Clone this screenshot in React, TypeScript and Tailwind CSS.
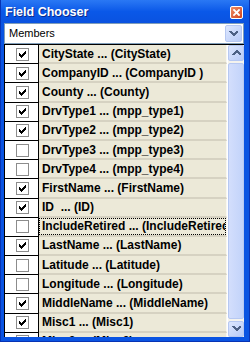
import React from "react";

type Row = { label: string; checked: boolean; focus?: boolean };

const rows: Row[] = [
  { label: "CityState ... (CityState)", checked: true },
  { label: "CompanyID ... (CompanyID )", checked: true },
  { label: "County ... (County)", checked: true },
  { label: "DrvType1 ... (mpp_type1)", checked: true },
  { label: "DrvType2 ... (mpp_type2)", checked: true },
  { label: "DrvType3 ... (mpp_type3)", checked: false },
  { label: "DrvType4 ... (mpp_type4)", checked: false },
  { label: "FirstName ... (FirstName)", checked: true },
  { label: "ID  ... (ID)", checked: true },
  { label: "IncludeRetired ... (IncludeRetired)", checked: false, focus: true },
  { label: "LastName ... (LastName)", checked: true },
  { label: "Latitude ... (Latitude)", checked: false },
  { label: "Longitude ... (Longitude)", checked: false },
  { label: "MiddleName ... (MiddleName)", checked: true },
  { label: "Misc1 ... (Misc1)", checked: true },
  { label: "Misc2 ... (Misc2)", checked: true },
];

const checkCols: [number, number][] = [
  [3, 5],
  [4, 6],
  [5, 7],
  [6, 6],
  [7, 5],
  [8, 4],
  [9, 3],
];

function CheckBox({ checked }: { checked: boolean }) {
  return (
    <svg width="13" height="13" viewBox="0 0 13 13" shapeRendering="crispEdges">
      <rect x="0.5" y="0.5" width="12" height="12" fill="#ffffff" stroke="#8c8c8c" />
      {checked &&
        checkCols.map(([x, y]) => <rect key={x} x={x} y={y} width="1" height="3" fill="#000000" />)}
    </svg>
  );
}

function Chevron({ up }: { up?: boolean }) {
  return (
    <svg width="9" height="6" viewBox="0 0 9 6" shapeRendering="crispEdges">
      {up ? (
        <path d="M0 4 L4 0 L5 0 L9 4 L9 5 L7 5 L4.5 2.5 L2 5 L0 5 Z" fill="#4d6185" />
      ) : (
        <path d="M0 0 L2 0 L4.5 2.5 L7 0 L9 0 L9 1 L5 5 L4 5 L0 1 Z" fill="#4d6185" />
      )}
    </svg>
  );
}

function ScrollButton({ up }: { up?: boolean }) {
  return (
    <div className="h-[16px] w-[16px] rounded-[2px] border border-[#b6c8f2] bg-gradient-to-br from-[#dde7fe] to-[#b8cbf8] flex items-center justify-center">
      <Chevron up={up} />
    </div>
  );
}

export default function App() {
  return (
    <div
      className="w-[250px] h-[342px] flex flex-col overflow-hidden bg-[#0a54e2] border-l border-r border-b border-[#0733b4]"
      style={{ fontFamily: '"Liberation Sans", Arial, sans-serif' }}
    >
      {/* Title bar */}
      <div className="h-[23px] shrink-0 flex items-center justify-between bg-gradient-to-b from-[#2a78f4] via-[#0a58e8] to-[#0a52e0] pl-[4px] pr-[6px]">
        <span className="text-white font-bold text-[12.5px] leading-none pt-[1px] [text-shadow:1px_1px_0_#0a2a8c]">
          Field Chooser
        </span>
        <div className="w-[13px] h-[13px] rounded-[2px] border border-white bg-gradient-to-br from-[#ec8a63] to-[#d2421a] flex items-center justify-center mt-[1px]">
          <svg width="7" height="7" viewBox="0 0 7 7">
            <path d="M1 1 L6 6 M6 1 L1 6" stroke="#ffffff" strokeWidth="1.8" strokeLinecap="square" />
          </svg>
        </div>
      </div>

      {/* Client */}
      <div className="flex-1 min-h-0 flex flex-col pl-[3px] pr-[5px] pb-[4px]">
        {/* Combo */}
        <div className="h-[21px] shrink-0 flex items-center justify-between bg-white border border-[#7f9db9] pl-[4px] pr-[1px]">
          <span className="text-[11px] text-black leading-none">Members</span>
          <div className="h-[17px] w-[17px] rounded-[2px] border border-[#b6c8f2] bg-gradient-to-br from-[#dde7fe] to-[#b8cbf8] flex items-center justify-center">
            <Chevron />
          </div>
        </div>

        {/* List */}
        <div className="flex-1 min-h-0 flex bg-white border-t border-black">
          <div className="w-[223px] flex flex-col overflow-hidden border-l border-black">
            {rows.map((r) => (
              <div key={r.label} className="h-[19.2px] shrink-0 flex">
                <div className="w-[34px] shrink-0 flex items-center pl-[11px] border-b border-r border-black bg-white">
                  <CheckBox checked={r.checked} />
                </div>
                <div className="flex-1 min-w-0 bg-[#ece9d8] border-b-2 border-b-[#d6d2c2] border-r border-r-[#f8f7f2] flex">
                  <div
                    className={
                      "flex-1 min-w-0 flex items-center pl-[2px] overflow-hidden " +
                      (r.focus ? "border border-dotted border-black" : "border border-transparent")
                    }
                  >
                    <span className="whitespace-pre font-bold text-[12px] text-black leading-none">{r.label}</span>
                  </div>
                </div>
              </div>
            ))}
          </div>
          <div className="w-[1px] shrink-0" />
          <div className="w-[16px] shrink-0 flex flex-col bg-[#f4f3ee]">
            <ScrollButton up />
            <div className="mt-[2px] h-[256px] rounded-[2px] border border-[#b6c8f2] bg-gradient-to-r from-[#d3defc] to-[#c2d3fa]" />
            <div className="flex-1" />
            <ScrollButton />
          </div>
        </div>
      </div>
    </div>
  );
}
